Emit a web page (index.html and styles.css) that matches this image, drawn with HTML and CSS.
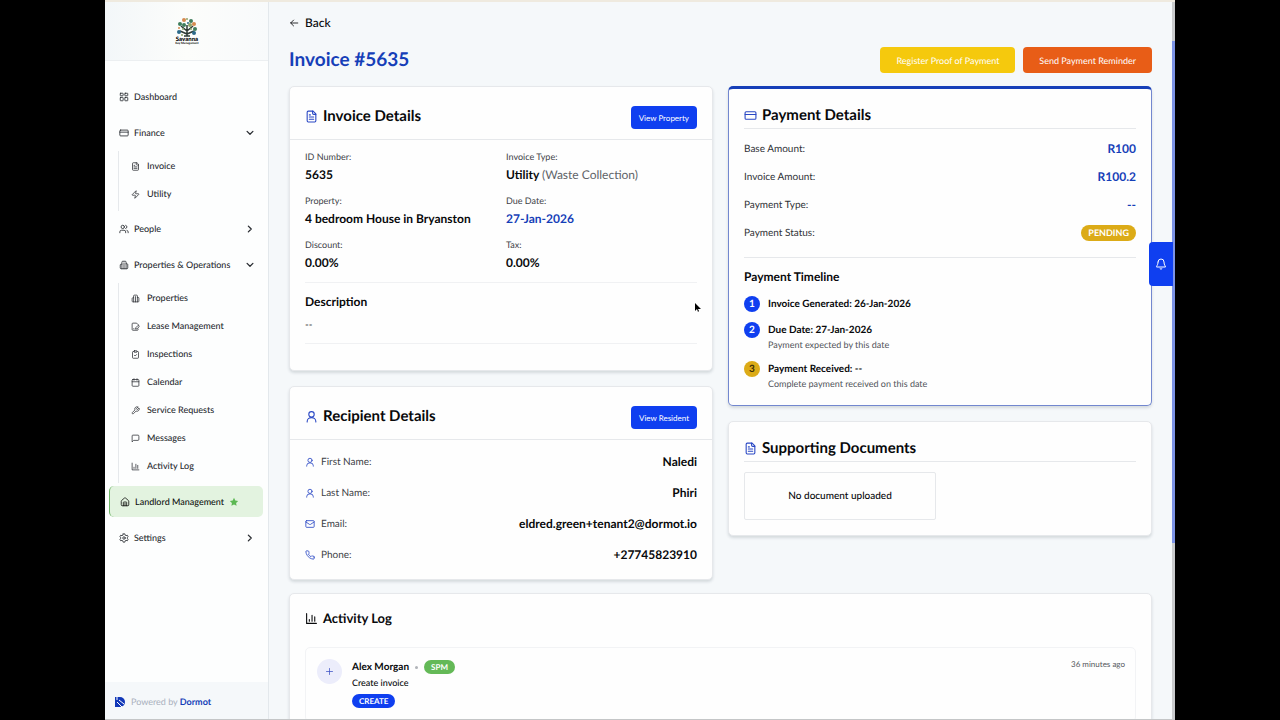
FILE: index.html
```html
<!DOCTYPE html>
<html lang="en">
<head>
  <meta charset="UTF-8">
  <meta name="viewport" content="width=device-width, initial-scale=1.0">
  <title>Invoice #5635 - Dormot</title>
  <link rel="stylesheet" href="styles.css">
</head>
<body>
  <!-- Icon set -->
  <svg class="sprite" aria-hidden="true">
    <symbol id="i-dashboard" viewBox="0 0 24 24"><rect x="3" y="3" width="7" height="6" rx="1"/><rect x="14" y="3" width="7" height="6" rx="1"/><rect x="14" y="13" width="7" height="8" rx="1"/><rect x="3" y="13" width="7" height="8" rx="1"/></symbol>
    <symbol id="i-card" viewBox="0 0 24 24"><rect x="2" y="5" width="20" height="14" rx="2"/><path d="M2 10h20"/></symbol>
    <symbol id="i-file" viewBox="0 0 24 24"><path d="M15 2H6a2 2 0 0 0-2 2v16a2 2 0 0 0 2 2h12a2 2 0 0 0 2-2V7Z"/><path d="M14 2v4a2 2 0 0 0 2 2h4"/><path d="M10 9H8M16 13H8M16 17H8"/></symbol>
    <symbol id="i-zap" viewBox="0 0 24 24"><path d="M4 14a1 1 0 0 1-.8-1.600l9.900-10.200a.5.5 0 0 1 .9.500l-1.900 6A1 1 0 0 0 13 10h7a1 1 0 0 1 .8 1.600l-9.900 10.200a.5.5 0 0 1-.9-.500l1.900-6A1 1 0 0 0 11 14z"/></symbol>
    <symbol id="i-users" viewBox="0 0 24 24"><path d="M16 21v-2a4 4 0 0 0-4-4H6a4 4 0 0 0-4 4v2"/><circle cx="9" cy="7" r="4"/><path d="M22 21v-2a4 4 0 0 0-3-3.870M16 3.130a4 4 0 0 1 0 7.750"/></symbol>
    <symbol id="i-building" viewBox="0 0 24 24"><path d="M7 21V5a2 2 0 0 1 2-2h6a2 2 0 0 1 2 2v16"/><path d="M7 10H5a2 2 0 0 0-2 2v7a2 2 0 0 0 2 2h14a2 2 0 0 0 2-2V11a2 2 0 0 0-2-2h-2"/><path d="M12 7v14"/></symbol>
    <symbol id="i-filepen" viewBox="0 0 24 24"><path d="M19 8V7l-4-4H5a2 2 0 0 0-2 2v15a2 2 0 0 0 2 2h12a2 2 0 0 0 2-2v-1"/><path d="M21.400 12.600a2 2 0 0 0-3-3L13 15l-1 4 4-1z"/><path d="M7 18h1"/></symbol>
    <symbol id="i-clipboard" viewBox="0 0 24 24"><rect x="8" y="2" width="8" height="4" rx="1"/><path d="M16 4h2a2 2 0 0 1 2 2v14a2 2 0 0 1-2 2H6a2 2 0 0 1-2-2V6a2 2 0 0 1 2-2h2"/><path d="m9 14 2 2 4-4"/></symbol>
    <symbol id="i-calendar" viewBox="0 0 24 24"><path d="M8 2v4M16 2v4M3 10h18"/><rect x="3" y="4" width="18" height="18" rx="2"/></symbol>
    <symbol id="i-wrench" viewBox="0 0 24 24"><path d="M14.700 6.300a1 1 0 0 0 0 1.400l1.600 1.600a1 1 0 0 0 1.400 0l3.770-3.770a6 6 0 0 1-7.940 7.940l-6.910 6.910a2.120 2.120 0 0 1-3-3l6.910-6.910a6 6 0 0 1 7.940-7.940z"/></symbol>
    <symbol id="i-message" viewBox="0 0 24 24"><path d="M21 15a2 2 0 0 1-2 2H7l-4 4V5a2 2 0 0 1 2-2h14a2 2 0 0 1 2 2z"/></symbol>
    <symbol id="i-chart" viewBox="0 0 24 24"><path d="M3 3v18h18"/><path d="M8 17v-3M13 17V6M18 17V9"/></symbol>
    <symbol id="i-home" viewBox="0 0 24 24"><path d="M3 10a2 2 0 0 1 .7-1.500l7-6a2 2 0 0 1 2.600 0l7 6A2 2 0 0 1 21 10v9a2 2 0 0 1-2 2H5a2 2 0 0 1-2-2z"/><path d="M8 21v-8a1 1 0 0 1 1-1h6a1 1 0 0 1 1 1v8M12 15v6"/></symbol>
    <symbol id="i-star" viewBox="0 0 24 24"><path d="m12 2 3.100 6.300 6.900 1-5 4.900 1.200 6.800-6.200-3.200L5.800 21 7 14.200 2 9.300l6.900-1z"/></symbol>
    <symbol id="i-gear" viewBox="0 0 24 24"><path d="M10 2h4l.8 3.200 2 1.200 3.200-1 2 3.500-2.400 2.300v1.600l2.400 2.300-2 3.500-3.200-1-2 1.200L14 22h-4l-.8-3.200-2-1.200-3.200 1-2-3.500 2.400-2.300v-1.600L2 8.900l2-3.500 3.200 1 2-1.200z"/><circle cx="12" cy="12" r="3"/></symbol>
    <symbol id="i-down" viewBox="0 0 24 24"><path d="m5 8 7 7 7-7"/></symbol>
    <symbol id="i-right" viewBox="0 0 24 24"><path d="m8 5 7 7-7 7"/></symbol>
    <symbol id="i-back" viewBox="0 0 24 24"><path d="m11 5-7 7 7 7M4 12h17"/></symbol>
    <symbol id="i-user" viewBox="0 0 24 24"><circle cx="12" cy="8" r="5"/><path d="M4 22v-1a8 7 0 0 1 16 0v1"/></symbol>
    <symbol id="i-mail" viewBox="0 0 24 24"><rect x="2" y="4" width="20" height="16" rx="2"/><path d="m2 7 8.900 6a2 2 0 0 0 2.200 0L22 7"/></symbol>
    <symbol id="i-phone" viewBox="0 0 24 24"><path d="M22 16.900v3a2 2 0 0 1-2.200 2 19.800 19.800 0 0 1-8.600-3.100 19.500 19.500 0 0 1-6-6 19.800 19.800 0 0 1-3.100-8.600A2 2 0 0 1 4.100 2h3a2 2 0 0 1 2 1.700 12.800 12.800 0 0 0 .7 2.800 2 2 0 0 1-.5 2.100L8.100 9.900a16 16 0 0 0 6 6l1.300-1.300a2 2 0 0 1 2.100-.4 12.800 12.800 0 0 0 2.800.7 2 2 0 0 1 1.700 2z"/></symbol>
    <symbol id="i-bell" viewBox="0 0 24 24"><path d="M6 8a6 6 0 0 1 12 0c0 7 3 7 3 10H3c0-3 3-3 3-10M10 21.500a2.500 2.500 0 0 0 4 0"/></symbol>
    <symbol id="i-plus" viewBox="0 0 24 24"><path d="M12 4v16M4 12h16"/></symbol>
  </svg>

  <div class="app">
    <aside class="sidebar">
      <div class="brand">
        <svg class="brand-logo" viewBox="0 0 24 28" role="img" aria-label="Savanna Key Management">
          <path d="M12 19V8M12 14 6 9M12 14l6-5M12 17l-7-3M12 17l7-3M9 19h6" fill="none" stroke="#2d3a35" stroke-width="1.500"/>
          <g fill="#3f7d5c"><circle cx="5" cy="7" r="2"/><circle cx="16" cy="4" r="2"/><circle cx="20" cy="12" r="2"/><circle cx="9" cy="8" r="2"/></g>
          <g fill="#d58a4e"><circle cx="9" cy="3" r="2"/><circle cx="19" cy="7" r="2"/><circle cx="4" cy="11" r="1"/></g>
          <g fill="#2c6a8a"><circle cx="4" cy="15" r="2"/><circle cx="13" cy="6" r="1"/><circle cx="19" cy="16" r="2"/></g>
          <g fill="#8fa46a"><circle cx="12" cy="2" r="1"/><circle cx="15" cy="8" r="2"/><circle cx="7" cy="18" r="1"/><circle cx="8" cy="12" r="1"/><circle cx="16" cy="12" r="1"/></g>
          <text x="12" y="24" class="brand-name" text-anchor="middle">Savanna</text>
          <text x="12" y="27" class="brand-tag" text-anchor="middle">Key Management</text>
        </svg>
      </div>

      <nav class="menu">
        <a href="#" class="menu-item"><svg class="icon"><use href="#i-dashboard"/></svg>Dashboard</a>
        <a href="#" class="menu-item"><svg class="icon"><use href="#i-card"/></svg>Finance<svg class="icon chevron"><use href="#i-down"/></svg></a>
        <div class="submenu">
          <a href="#" class="submenu-item"><svg class="icon"><use href="#i-file"/></svg>Invoice</a>
          <a href="#" class="submenu-item"><svg class="icon"><use href="#i-zap"/></svg>Utility</a>
        </div>
        <a href="#" class="menu-item"><svg class="icon"><use href="#i-users"/></svg>People<svg class="icon chevron"><use href="#i-right"/></svg></a>
        <a href="#" class="menu-item"><svg class="icon"><use href="#i-building"/></svg>Properties &amp; Operations<svg class="icon chevron"><use href="#i-down"/></svg></a>
        <div class="submenu">
          <a href="#" class="submenu-item"><svg class="icon"><use href="#i-building"/></svg>Properties</a>
          <a href="#" class="submenu-item"><svg class="icon"><use href="#i-filepen"/></svg>Lease Management</a>
          <a href="#" class="submenu-item"><svg class="icon"><use href="#i-clipboard"/></svg>Inspections</a>
          <a href="#" class="submenu-item"><svg class="icon"><use href="#i-calendar"/></svg>Calendar</a>
          <a href="#" class="submenu-item"><svg class="icon"><use href="#i-wrench"/></svg>Service Requests</a>
          <a href="#" class="submenu-item"><svg class="icon"><use href="#i-message"/></svg>Messages</a>
          <a href="#" class="submenu-item"><svg class="icon"><use href="#i-chart"/></svg>Activity Log</a>
        </div>
        <a href="#" class="menu-item highlight"><svg class="icon"><use href="#i-home"/></svg>Landlord Management<svg class="icon star"><use href="#i-star"/></svg></a>
        <a href="#" class="menu-item"><svg class="icon"><use href="#i-gear"/></svg>Settings<svg class="icon chevron"><use href="#i-right"/></svg></a>
      </nav>

      <div class="powered">
        <svg class="powered-logo" viewBox="0 0 10 10" aria-hidden="true">
          <path d="M0 0h5a5 5 0 0 1 0 10H0z" fill="#1238b8"/>
          <path d="M2 0v3M2 5l5 5M4 3l5 4" stroke="#fff" stroke-width="1" fill="none"/>
        </svg>
        <span>Powered by <a href="#">Dormot</a></span>
      </div>
    </aside>

    <main class="content">
      <a href="#" class="back"><svg class="icon"><use href="#i-back"/></svg>Back</a>
      <div class="page-head">
        <h1>Invoice #5635</h1>
        <div class="actions">
          <button type="button" class="btn btn-yellow">Register Proof of Payment</button>
          <button type="button" class="btn btn-orange">Send Payment Reminder</button>
        </div>
      </div>

      <div class="columns">
        <div class="column">
          <section class="card">
            <div class="card-head">
              <h2><svg class="icon"><use href="#i-file"/></svg>Invoice Details</h2>
              <button type="button" class="btn btn-blue">View Property</button>
            </div>
            <div class="details">
              <dl class="fields">
                <div><dt>ID Number:</dt><dd>5635</dd></div>
                <div><dt>Invoice Type:</dt><dd>Utility <span class="muted">(Waste Collection)</span></dd></div>
                <div><dt>Property:</dt><dd>4 bedroom House in Bryanston</dd></div>
                <div><dt>Due Date:</dt><dd class="blue">27-Jan-2026</dd></div>
                <div><dt>Discount:</dt><dd>0.00%</dd></div>
                <div><dt>Tax:</dt><dd>0.00%</dd></div>
              </dl>
              <div class="description">
                <h3>Description</h3>
                <p>--</p>
              </div>
            </div>
          </section>

          <section class="card">
            <div class="card-head">
              <h2><svg class="icon"><use href="#i-user"/></svg>Recipient Details</h2>
              <button type="button" class="btn btn-blue">View Resident</button>
            </div>
            <dl class="recipient">
              <div><dt><svg class="icon"><use href="#i-user"/></svg>First Name:</dt><dd>Naledi</dd></div>
              <div><dt><svg class="icon"><use href="#i-user"/></svg>Last Name:</dt><dd>Phiri</dd></div>
              <div><dt><svg class="icon"><use href="#i-mail"/></svg>Email:</dt><dd>eldred.green+tenant2@dormot.io</dd></div>
              <div><dt><svg class="icon"><use href="#i-phone"/></svg>Phone:</dt><dd>+27745823910</dd></div>
            </dl>
          </section>
        </div>

        <div class="column">
          <section class="card payment">
            <h2 class="ruled"><svg class="icon"><use href="#i-card"/></svg>Payment Details</h2>
            <dl class="amounts">
              <div><dt>Base Amount:</dt><dd>R100</dd></div>
              <div><dt>Invoice Amount:</dt><dd>R100.2</dd></div>
              <div><dt>Payment Type:</dt><dd>--</dd></div>
              <div><dt>Payment Status:</dt><dd><span class="status">PENDING</span></dd></div>
            </dl>
            <h3>Payment Timeline</h3>
            <ol class="timeline">
              <li><span class="step">1</span><strong>Invoice Generated: 26-Jan-2026</strong></li>
              <li><span class="step">2</span><div><strong>Due Date: 27-Jan-2026</strong><p>Payment expected by this date</p></div></li>
              <li><span class="step step-pending">3</span><div><strong>Payment Received: --</strong><p>Complete payment received on this date</p></div></li>
            </ol>
          </section>

          <section class="card documents">
            <h2 class="ruled"><svg class="icon"><use href="#i-file"/></svg>Supporting Documents</h2>
            <p class="empty">No document uploaded</p>
          </section>
        </div>
      </div>

      <section class="card activity">
        <h2><svg class="icon"><use href="#i-chart"/></svg>Activity Log</h2>
        <article class="entry">
          <span class="entry-icon"><svg class="icon"><use href="#i-plus"/></svg></span>
          <div class="entry-body">
            <div class="entry-user"><strong>Alex Morgan</strong><span class="dot"></span><span class="tag tag-green">SPM</span></div>
            <p>Create invoice</p>
            <span class="tag tag-blue">CREATE</span>
          </div>
          <time>36 minutes ago</time>
        </article>
      </section>
    </main>

    <div class="scrollbar"><div class="thumb"></div></div>
    <button type="button" class="bell" aria-label="Notifications"><svg class="icon"><use href="#i-bell"/></svg></button>
  </div>

  <svg class="cursor" viewBox="0 0 8 12" aria-hidden="true"><path d="M1 1v8l2-2 1 3 1-1-1-2h3z" fill="#000" stroke="#fff" stroke-width="1" paint-order="stroke"/></svg>
</body>
</html>
```
FILE: styles.css
```css
:root {
  --blue: #0f3ff0;
  --dark-blue: #163fb8;
  --page-bg: #f5f8fa;
  --line: #e6e8eb;
  --text: #08090b;
  --label: #404247;
}
* {
  box-sizing: border-box;
}
body {
  margin: 0;
  background: #000;
  color: var(--text);
  font-family: Lato, sans-serif;
  font-size: 12px;
  line-height: 16px;
  text-rendering: geometricPrecision;
}
h1, h2, h3, p, dl, dd, ol {
  margin: 0;
  padding: 0;
}
a {
  color: inherit;
  text-decoration: none;
}
.sprite {
  position: absolute;
  width: 0;
  height: 0;
}
.icon {
  width: 12px;
  height: 12px;
  flex: none;
  fill: none;
  stroke: currentColor;
  stroke-width: 2;
  stroke-linecap: round;
  stroke-linejoin: round;
}
.app {
  position: relative;
  display: flex;
  height: 100vh;
  margin: 0 105px;
  overflow: hidden;
  background: var(--page-bg);
  border-top: 2px solid #efeadf;
  border-bottom: 1px solid #c4c6c7;
}

/* Sidebar */
.sidebar {
  display: flex;
  flex-direction: column;
  flex: none;
  width: 164px;
  background: #fdfefe;
  border-right: 1px solid #e3e8ec;
}
.brand {
  display: flex;
  justify-content: center;
  align-items: center;
  height: 59px;
  background: linear-gradient(90deg, #f3f7f9, #fcfdfb 50%, #f8fafb);
  border-bottom: 1px solid #eceff1;
}
.brand-logo {
  width: 24px;
  height: 28px;
}
.brand-name {
  font-size: 6px;
  font-weight: 900;
}
.brand-tag {
  font-size: 3px;
  font-weight: 700;
}
.menu {
  flex: 1;
  padding: 18px 5px 0 4px;
  color: #292c31;
  font-size: 9px;
  font-weight: 500;
}
.menu-item {
  display: flex;
  align-items: center;
  gap: 5px;
  height: 36px;
  padding: 0 8px 0 10px;
  white-space: nowrap;
}
.menu-item .icon {
  width: 10px;
  height: 10px;
}
.menu-item .chevron {
  width: 10px;
  height: 10px;
  margin-left: auto;
  stroke-width: 3;
}
.submenu {
  margin-left: 9px;
  padding: 1px 0 3px;
  border-left: 1px solid #e6e9ec;
}
.submenu-item {
  display: flex;
  align-items: center;
  gap: 7px;
  height: 28px;
  padding-left: 12px;
}
.submenu-item .icon {
  width: 9px;
  height: 9px;
}
.menu .highlight {
  height: 31px;
  margin: 3px 0;
  background: #e3f3e0;
  border-left: 1px solid #6fb567;
  border-radius: 5px;
  color: #121512;
}
.menu .star {
  fill: #5cb853;
  stroke: none;
}
.powered {
  display: flex;
  align-items: center;
  gap: 6px;
  height: 37px;
  padding: 2px 10px 0;
  background: var(--page-bg);
  color: #a9b0bd;
  font-size: 9px;
}
.powered a {
  color: var(--dark-blue);
  font-weight: 700;
}
.powered-logo {
  width: 10px;
  height: 10px;
}

/* Page */
.content {
  flex: 1;
  min-width: 0;
  padding: 13px 20px 0;
}
.back {
  display: inline-flex;
  align-items: center;
  gap: 6px;
  font-weight: 500;
}
.back .icon {
  width: 10px;
  height: 10px;
}
.page-head {
  display: flex;
  justify-content: space-between;
  align-items: center;
  height: 26px;
  margin: 15px 0 13px;
}
h1 {
  color: var(--dark-blue);
  font-size: 19px;
  font-weight: 700;
  line-height: 26px;
}
.actions {
  display: flex;
  gap: 8px;
}
.btn {
  height: 26px;
  padding: 0 16px;
  border: none;
  border-radius: 4px;
  color: #fff;
  font-family: inherit;
  font-size: 9px;
  text-rendering: inherit;
  cursor: pointer;
}
.btn-yellow {
  background: #f5c90d;
}
.btn-orange {
  background: #e85d17;
}
.btn-blue {
  height: 23px;
  padding: 0 8px;
  background: var(--blue);
  font-size: 8px;
}
.columns {
  display: grid;
  grid-template-columns: 1fr 1fr;
  gap: 15px;
  align-items: start;
}
.column {
  display: grid;
  gap: 15px;
}
.card {
  background: #fefefe;
  border: 1px solid var(--line);
  border-radius: 5px;
  box-shadow: 0 2px 3px rgba(30, 45, 60, 0.15);
}
h2 {
  display: flex;
  align-items: center;
  gap: 5px;
  font-size: 15px;
  font-weight: 700;
  line-height: 20px;
}
h2 .icon {
  width: 13px;
  height: 13px;
  color: #2947c4;
}
h3 {
  font-size: 12px;
  font-weight: 700;
  line-height: 18px;
}
.card-head {
  display: flex;
  justify-content: space-between;
  align-items: flex-start;
  padding: 19px 15px 10px;
  border-bottom: 1px solid var(--line);
}

/* Invoice details */
.details {
  padding: 10px 15px 26px;
}
.fields {
  display: grid;
  grid-template-columns: 1fr 1fr;
  gap: 10px;
  padding-bottom: 10px;
  border-bottom: 1px solid #f0f1f3;
}
.fields dt {
  color: var(--label);
  font-size: 9px;
  line-height: 14px;
  margin-bottom: 2px;
}
.fields dd {
  font-weight: 700;
  line-height: 18px;
}
.fields .blue {
  color: var(--dark-blue);
}
.muted {
  color: #606368;
  font-weight: 400;
}
.description {
  padding: 10px 0;
  border-bottom: 1px solid #f0f1f3;
}
.description p {
  margin-top: 6px;
  font-size: 10px;
}

/* Recipient */
.recipient {
  padding: 6px 15px 9px;
}
.recipient div {
  display: flex;
  justify-content: space-between;
  align-items: center;
  height: 31px;
}
.recipient dt {
  display: flex;
  align-items: center;
  gap: 6px;
  color: var(--label);
  font-size: 10px;
}
.recipient .icon {
  width: 10px;
  height: 10px;
  color: #2947c4;
}
.recipient dd {
  font-weight: 700;
}

/* Payment */
.payment {
  padding: 16px 15px 15px;
  border-color: #7287cf;
  border-top: 3px solid var(--dark-blue);
}
.ruled {
  padding-bottom: 3px;
  border-bottom: 1px solid var(--line);
}
.amounts {
  padding: 6px 0 10px;
  margin-bottom: 10px;
  border-bottom: 1px solid var(--line);
}
.amounts div {
  display: flex;
  justify-content: space-between;
  align-items: center;
  height: 28px;
}
.amounts dt {
  color: #303237;
  font-size: 10px;
}
.amounts dd {
  color: var(--dark-blue);
  font-weight: 700;
}
.status {
  display: block;
  padding: 0 7px;
  border-radius: 8px;
  background: #dcab17;
  color: #fff;
  font-size: 9px;
}
.timeline {
  display: grid;
  gap: 10px;
  margin-top: 10px;
  list-style: none;
}
.timeline li {
  display: flex;
  gap: 8px;
  font-size: 10px;
}
.timeline p {
  color: #505359;
  font-size: 9px;
  line-height: 13px;
}
.step {
  width: 16px;
  height: 16px;
  border-radius: 50%;
  background: var(--blue);
  color: #fff;
  font-size: 10px;
  font-weight: 700;
  text-align: center;
}
.step-pending {
  background: #dcab17;
  color: #3a2d08;
}
.documents {
  padding: 16px 15px 15px;
}
.empty {
  width: 49%;
  margin-top: 10px;
  padding: 15px 10px;
  border: 1px solid var(--line);
  border-radius: 2px;
  font-size: 10px;
  font-weight: 500;
  text-align: center;
}

/* Activity log */
.activity {
  margin-top: 13px;
  padding: 14px 15px;
}
.activity h2 {
  font-size: 13px;
}
.activity h2 .icon {
  color: inherit;
}
.entry {
  display: flex;
  gap: 10px;
  margin-top: 19px;
  padding: 11px 10px 12px 11px;
  border: 1px solid #f2f3f5;
  border-radius: 5px;
}
.entry-icon {
  display: flex;
  justify-content: center;
  align-items: center;
  width: 25px;
  height: 25px;
  border-radius: 50%;
  background: #ecedfb;
  color: #3d52c4;
}
.entry-icon .icon {
  width: 9px;
  height: 9px;
}
.entry-body {
  flex: 1;
  font-size: 9px;
}
.entry-body p {
  margin-bottom: 2px;
  font-weight: 500;
}
.entry-user {
  display: flex;
  align-items: center;
  gap: 6px;
  font-size: 10px;
}
.dot {
  width: 3px;
  height: 3px;
  border-radius: 50%;
  background: #b0b3b8;
}
.tag {
  display: inline-block;
  padding: 0 7px;
  border-radius: 7px;
  color: #fff;
  font-size: 8px;
  font-weight: 700;
  line-height: 14px;
}
.tag-green {
  background: #64b957;
}
.tag-blue {
  background: var(--blue);
}
.entry time {
  color: #55585d;
  font-size: 8px;
  line-height: 10px;
}

/* Edge controls */
.scrollbar {
  width: 3px;
  padding-top: 39px;
  background: #c9cbcd;
}
.thumb {
  height: 74%;
  background: #7c93e6;
}
.bell {
  position: absolute;
  top: 240px;
  right: 2px;
  display: flex;
  justify-content: center;
  align-items: center;
  width: 24px;
  height: 44px;
  padding: 0;
  border: none;
  border-radius: 4px 0 0 4px;
  background: var(--blue);
  color: #fff;
  cursor: pointer;
}
.cursor {
  position: absolute;
  top: 302px;
  left: 694px;
  width: 8px;
  height: 12px;
}
```
